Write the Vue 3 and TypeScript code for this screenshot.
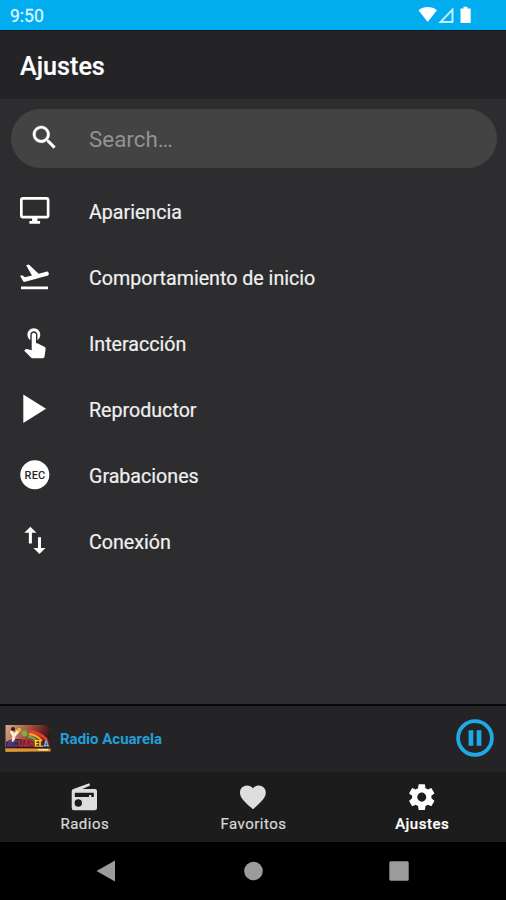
<script setup lang="ts">
interface SettingItem {
  label: string
  viewBox: string
  path?: string
  rec?: boolean
}

const settings: SettingItem[] = [
  {
    label: 'Apariencia',
    viewBox: '-1.24 -0.98 26.87 26.87',
    path: 'M21 2H3c-1.1 0-2 .9-2 2v12c0 1.1.9 2 2 2h7v2H8v2h8v-2h-2v-2h7c1.1 0 2-.9 2-2V4c0-1.1-.9-2-2-2zm0 14H3V4h18v12z',
  },
  {
    label: 'Comportamiento de inicio',
    viewBox: '-0.32 -0.34 25.35 25.35',
    path: 'M2.5 19h19v2h-19v-2zm19.57-9.36c-.21-.8-1.04-1.28-1.84-1.06L14.92 10l-6.9-6.43-1.93.51 4.14 7.17-4.97 1.33-1.97-1.54-1.45.39 1.82 3.16.77 1.33 1.6-.43 5.31-1.42 4.35-1.16L21 11.49c.81-.23 1.28-1.05 1.07-1.85z',
  },
  {
    label: 'Interacción',
    viewBox: '-0.3 0.64 25.2 25.2',
    path: 'M9 11.24V7.5C9 6.12 10.12 5 11.5 5S14 6.12 14 7.5v3.74c1.21-.81 2-2.18 2-3.74C16 5.01 13.99 3 11.5 3S7 5.01 7 7.5c0 1.56.79 2.93 2 3.74zm9.84 4.63l-4.54-2.26c-.17-.07-.35-.11-.54-.11H13v-6c0-.83-.67-1.5-1.5-1.5S10 6.67 10 7.5v10.74l-3.43-.72c-.08-.01-.15-.03-.24-.03-.31 0-.59.13-.79.33l-.79.8 4.94 4.94c.27.27.65.44 1.06.44h6.79c.75 0 1.33-.55 1.44-1.28l.75-5.27c.01-.07.02-.14.02-.2 0-.62-.38-1.16-.91-1.38z',
  },
  { label: 'Reproductor', viewBox: '0 0 36 36', path: 'M6.3 3.5v28.5L29 17.8z' },
  { label: 'Grabaciones', viewBox: '0 0 36 36', rec: true },
  {
    label: 'Conexión',
    viewBox: '0.2 0.57 23.7 23.7',
    path: 'M16 17.01V10h-2v7.01h-3L15 21l4-3.99h-3zM9 3L5 6.99h3V14h2V6.99h3L9 3z',
  },
]

const tabs = [
  {
    label: 'Radios',
    active: false,
    viewBox: '0.5 0 31 31',
    path: 'M20.700 1.300l1 2.300-7.800 3.300h12.400q2.200 0 2.200 2.200v16.900q0 2.300-2.300 2.300H5.500q-2.300 0-2.300-2.300V9.200q0-1.800 1.700-2.200zM6.300 10.800v4.200h14.200v-2h2.300v2h2.500v-4.200zM9.800 17.300a3.700 3.700 0 1 0 0 7.400 3.700 3.700 0 1 0 0-7.400z',
  },
  {
    label: 'Favoritos',
    active: false,
    viewBox: '-0.3 0.2 24 24',
    path: 'M12 21.35l-1.45-1.32C5.4 15.36 2 12.28 2 8.5 2 5.42 4.42 3 7.500 3c1.740 0 3.410.81 4.500 2.090C13.090 3.810 14.760 3 16.500 3 19.580 3 22 5.420 22 8.500c0 3.780-3.400 6.860-8.550 11.540L12 21.350z',
  },
  {
    label: 'Ajustes',
    active: true,
    viewBox: '-0.2 0.3 24 24',
    path: 'M12 15.500A3.500 3.500 0 0 1 8.500 12 3.500 3.500 0 0 1 12 8.500a3.500 3.500 0 0 1 3.500 3.500 3.500 3.500 0 0 1-3.500 3.500m7.430-2.530c.04-.32.07-.64.07-.97s-.03-.66-.07-1l2.110-1.630c.19-.15.24-.42.12-.64l-2-3.460c-.12-.22-.39-.31-.61-.22l-2.490 1c-.52-.39-1.060-.73-1.690-.98l-.37-2.650A.506.506 0 0 0 14 2h-4c-.25 0-.46.18-.5.42l-.37 2.650c-.63.25-1.170.59-1.690.98l-2.490-1c-.22-.09-.49 0-.61.22l-2 3.460c-.13.22-.07.49.12.64L4.570 11c-.04.34-.07.67-.07 1s.03.65.07.97l-2.110 1.660c-.19.15-.25.42-.12.64l2 3.460c.12.22.39.300.61.220l2.490-1.010c.52.400 1.060.740 1.690.990l.37 2.650c.04.240.25.420.500.420h4c.25 0 .46-.180.500-.420l.37-2.650c.63-.260 1.170-.590 1.690-.990l2.490 1.010c.22.080.49 0 .61-.220l2-3.460c.12-.220.070-.490-.120-.640l-2.110-1.660Z',
  },
]
</script>

<template>
  <div class="screen">
    <div class="status">
      <span class="clock">9:50</span>
      <svg class="status-icons" width="56" height="18" viewBox="0 0 56 18">
        <path d="M.5 4.300C6 0 13.500 0 19 4.300L9.700 16z" fill="#fff" />
        <path d="M34.500 3.500v12.500H22.500z" fill="none" stroke="#c9eeff" stroke-width="1.900" />
        <path d="M45.500.8h4v1.700h3.200V17h-10.200V2.500h3z" fill="#fff" />
      </svg>
    </div>

    <header class="header"><h1>Ajustes</h1></header>

    <main class="content">
      <label class="search">
        <svg class="search-icon" width="31" height="31" viewBox="0 0 24 24">
          <path d="M15.500 14h-.79l-.28-.27C15.410 12.590 16 11.110 16 9.500 16 5.910 13.090 3 9.500 3S3 5.910 3 9.500 5.910 16 9.500 16c1.610 0 3.090-.59 4.230-1.570l.27.28v.79l5 4.990L20.490 19l-4.990-5zm-6 0C7.010 14 5 11.990 5 9.500S7.010 5 9.500 5 14 7.010 14 9.500 11.990 14 9.500 14z" />
        </svg>
        <span>Search…</span>
      </label>

      <ul class="list">
        <li v-for="item in settings" :key="item.label" class="row">
          <svg class="row-icon" width="36" height="36" :viewBox="item.viewBox">
            <path v-if="item.path" :d="item.path" />
            <template v-if="item.rec">
              <circle cx="17.800" cy="17.800" r="14.500" />
              <text class="rec" x="7.600" y="21.800" textLength="20.600" lengthAdjust="spacing">REC</text>
            </template>
          </svg>
          <span class="row-label">{{ item.label }}</span>
        </li>
      </ul>
    </main>

    <section class="player">
      <svg class="cover" width="46" height="27" viewBox="0 0 46 27">
        <defs>
          <linearGradient id="sky" x1="0" y1="0" x2="1" y2="0.300">
            <stop offset="0" stop-color="#d9a68a" />
            <stop offset="0.450" stop-color="#a8604c" />
            <stop offset="0.800" stop-color="#6b2723" />
            <stop offset="1" stop-color="#341719" />
          </linearGradient>
        </defs>
        <path d="M.5 0H40q5 2 5.500 8v19H.5z" fill="url(#sky)" />
        <path d="M1 17Q8 12 20 15T45 15v8H1z" fill="#51202d" />
        <path d="M24 6q10 1 18 9" fill="none" stroke="#e83c28" stroke-width="3" />
        <path d="M24 9q8 1 13 7" fill="none" stroke="#f0a321" stroke-width="2.500" />
        <path d="M23 11.500q6 1 9 5" fill="none" stroke="#6fa746" stroke-width="2.500" />
        <path d="M6 6l3 5 4-5M9 10l-1 7" fill="none" stroke="#fff0d0" stroke-width="3" />
        <circle cx="8" cy="4" r="2" fill="#302027" />
        <circle cx="14" cy="5" r="2" fill="#e8c22d" />
        <circle cx="19.500" cy="8.500" r="3" fill="#85a83e" />
        <text class="cover-text" x="2" y="21.500" textLength="42" lengthAdjust="spacingAndGlyphs"><tspan fill="#4d3fa6">AC</tspan><tspan fill="#c22b3d">UAR</tspan><tspan fill="#ffdc21">EL</tspan><tspan fill="#7bb2d5">A</tspan></text>
        <path d="M.5 21.800h45v1.700H.5z" fill="#271a20" />
        <path d="M.5 23.500h45V26.500H.5z" fill="#de982f" />
        <path d="M33 24h10v1.500H33z" fill="#fae1a5" />
      </svg>
      <span class="station">Radio Acuarela</span>
      <svg class="pause" width="38" height="38" viewBox="0 0 38 38">
        <circle cx="19" cy="19" r="16.900" fill="none" stroke="#1cabe7" stroke-width="3.800" />
        <path d="M12.600 11.300h4.700v15.400h-4.700zM20.700 11.300h4.700v15.400h-4.700z" fill="#1cabe7" />
      </svg>
    </section>

    <nav class="tabs">
      <div v-for="tab in tabs" :key="tab.label" class="tab" :class="{ active: tab.active }">
        <svg width="31" height="31" :viewBox="tab.viewBox"><path :d="tab.path" fill-rule="evenodd" /></svg>
        <span>{{ tab.label }}</span>
      </div>
    </nav>

    <div class="system">
      <svg width="20" height="22" viewBox="0 0 20 22"><path d="M19 .5v21L.5 11z" /></svg>
      <svg width="20" height="20" viewBox="0 0 20 20"><circle cx="10.500" cy="10" r="9.300" /></svg>
      <svg width="20" height="20" viewBox="0 0 20 20"><rect x=".3" y=".3" width="19.400" height="19.400" rx="1.500" /></svg>
    </div>
  </div>
</template>

<style>
body {
  margin: 0;
  background: #000;
}
</style>

<style scoped>
.screen {
  width: 506px;
  height: 900px;
  display: flex;
  flex-direction: column;
  overflow: hidden;
  background: #2d2d2f;
  color: #f0f0f0;
  font-family: Roboto, "Liberation Sans", sans-serif;
}
svg {
  display: block;
  flex: none;
}
.status {
  box-sizing: border-box;
  height: 31px;
  flex: none;
  display: flex;
  justify-content: space-between;
  align-items: flex-start;
  padding: 6px 32px 0 10px;
  background: #02adef;
  border-bottom: 1px solid #071820;
}
.clock {
  font-size: 17.5px;
  line-height: 20px;
  color: #d9f3ff;
  -webkit-text-stroke: 0.3px #d9f3ff;
}
.header {
  height: 68px;
  flex: none;
  display: flex;
  align-items: center;
  padding-left: 20px;
  background: #242426;
}
h1 {
  margin: 3px 0 0;
  font-size: 25.2px;
  font-weight: 500;
  line-height: 30px;
  color: #fff;
  -webkit-text-stroke: 0.2px #fff;
}
.content {
  flex: 1;
  min-height: 0;
}
.search {
  display: flex;
  align-items: center;
  height: 58.5px;
  margin: 10px 9px 0 10.5px;
  padding-left: 18.5px;
  border-radius: 30px;
  background: #434344;
  color: #929292;
  font-size: 22.4px;
}
.search-icon {
  fill: #fff;
  stroke: #fff;
  stroke-width: 0.3px;
  margin-top: -1px;
}
.search span {
  margin: 1px 0 0 29px;
}
.list {
  list-style: none;
  margin: 10.5px 0 0;
  padding: 0;
}
.row {
  height: 66px;
  display: flex;
  align-items: center;
  padding-left: 17px;
}
.row-icon {
  fill: #fff;
}
.row-label {
  margin: 4px 0 0 36px;
  font-size: 19.65px;
  line-height: 26px;
  -webkit-text-stroke: 0.2px #f0f0f0;
}
.rec {
  fill: #29292b;
  font-size: 11px;
  font-weight: 500;
}
.player {
  box-sizing: border-box;
  height: 68px;
  flex: none;
  display: flex;
  align-items: center;
  padding: 0 12.5px 2px 5px;
  border-top: 2px solid #090909;
  background: #242426;
}
.cover-text {
  font-size: 9px;
  font-weight: 900;
}
.station {
  flex: 1;
  margin: 1px 0 0 9px;
  font-size: 15px;
  font-weight: 700;
  color: #229fd6;
}
.tabs {
  height: 70px;
  flex: none;
  display: grid;
  grid-template-columns: repeat(3, 1fr);
  background: #1c1c1c;
}
.tab {
  display: flex;
  flex-direction: column;
  align-items: center;
  padding-top: 10px;
  color: #d8d8d8;
  fill: #dedede;
  font-size: 15px;
  line-height: 20px;
  letter-spacing: 0.5px;
}
.tab span {
  margin: 1px 0 0 1px;
  -webkit-text-stroke: 0.2px currentColor;
}
.tab.active {
  color: #fff;
  fill: #fff;
  font-weight: 500;
}
.system {
  height: 58px;
  flex: none;
  box-sizing: border-box;
  display: flex;
  justify-content: space-between;
  align-items: center;
  padding: 0 97px 0 96px;
  background: #000;
  fill: #9b9b9b;
}
</style>
